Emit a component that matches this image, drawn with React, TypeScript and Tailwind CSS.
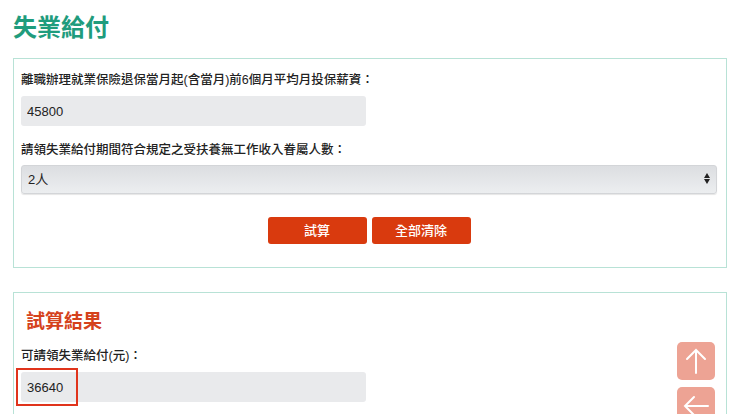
import { useState } from "react";

const FONT = { fontFamily: '"Helvetica Neue", "Liberation Sans", "Noto Sans CJK TC", sans-serif' };

export default function App() {
  const [salary, setSalary] = useState("45800");
  const [people, setPeople] = useState("2");

  return (
    <div className="min-h-screen bg-white text-[#222] px-[13px]" style={FONT}>
      <h1 className="pt-[12px] text-[24px] font-bold leading-[32px] text-[#1f9c7d]">失業給付</h1>

      <div className="mt-[14px] border border-[#b8e2d6] pl-[7px] pr-[9px] pt-[12px] pb-[23px]">
        <label className="block text-[12.5px] leading-[18px] font-medium">
          離職辦理就業保險退保當月起(含當月)前6個月平均月投保薪資：
        </label>
        <input
          type="text"
          value={salary}
          onChange={(e) => setSalary(e.target.value)}
          className="mt-[7px] block h-[30px] w-[345px] rounded-[3px] bg-[#e9eaec] px-[6px] text-[13px] outline-none"
        />
        <label className="mt-[15px] block text-[12.5px] leading-[18px] font-medium">
          請領失業給付期間符合規定之受扶養無工作收入眷屬人數：
        </label>
        <div className="relative mt-[6px]">
          <select
            value={people}
            onChange={(e) => setPeople(e.target.value)}
            className="block h-[29px] w-full appearance-none rounded-[3px] border border-[#d3d5d8] bg-gradient-to-b from-[#dcdee1] to-[#eceef0] px-[6px] text-[13px] outline-none shadow-[0_1px_1px_rgba(0,0,0,0.1)]"
          >
            <option value="0">0人</option>
            <option value="1">1人</option>
            <option value="2">2人</option>
            <option value="3">3人</option>
          </select>
          <span className="pointer-events-none absolute right-[7px] top-[8px] flex flex-col items-center gap-[1px]">
            <span className="block h-0 w-0 border-x-[3px] border-b-[5px] border-x-transparent border-b-[#222]" />
            <span className="block h-0 w-0 border-x-[3px] border-t-[5px] border-x-transparent border-t-[#222]" />
          </span>
        </div>
        <div className="mt-[23px] flex justify-center gap-[5px]">
          <button className="h-[27px] w-[99px] rounded-[3px] bg-[#d93a0e] text-[13px] font-medium text-white">試算</button>
          <button className="h-[27px] w-[99px] rounded-[3px] bg-[#d93a0e] text-[13px] font-medium text-white">全部清除</button>
        </div>
      </div>

      <div className="mt-[24px] border border-[#b8e2d6] pl-[7px] pr-[9px] pt-[16px] pb-[20px]">
        <h2 className="pl-[5px] text-[19px] font-bold leading-[26px] text-[#d5421c]">試算結果</h2>
        <label className="mt-[12px] block text-[12.5px] leading-[18px] font-medium">可請領失業給付(元)：</label>
        <div className="relative mt-[7px] w-[345px]">
          <input
            type="text"
            readOnly
            value="36640"
            className="block h-[30px] w-full rounded-[3px] bg-[#e9eaec] px-[6px] text-[13px] outline-none"
          />
          <span className="pointer-events-none absolute left-[-5px] top-[-4px] h-[38px] w-[62px] border-[2px] border-[#e0341c]" />
        </div>
      </div>

      <div className="fixed right-[25px] top-[342px] flex flex-col gap-[7px]">
        <button className="flex h-[38px] w-[38px] items-center justify-center rounded-[5px] bg-[#eda394] text-white">
          <svg width="22" height="28" viewBox="0 0 22 28" fill="none" stroke="currentColor" strokeWidth="2" strokeLinecap="round">
            <path d="M11 26V3M2 12l9-9 9 9" />
          </svg>
        </button>
        <button className="flex h-[38px] w-[38px] items-center justify-center rounded-[5px] bg-[#eda394] text-white">
          <svg width="28" height="22" viewBox="0 0 28 22" fill="none" stroke="currentColor" strokeWidth="2" strokeLinecap="round">
            <path d="M26 11H3M12 2l-9 9 9 9" />
          </svg>
        </button>
      </div>
    </div>
  );
}
